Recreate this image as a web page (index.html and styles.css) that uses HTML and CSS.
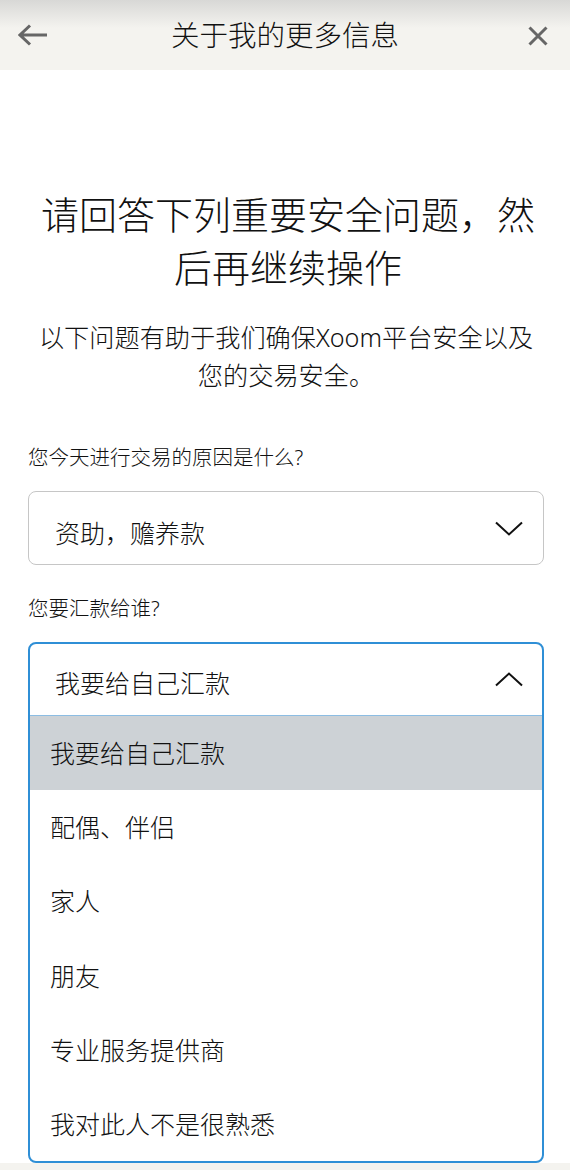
FILE: index.html
```html
<!DOCTYPE html>
<html lang="zh-CN">
<head>
<meta charset="utf-8">
<link rel="stylesheet" href="styles.css">
</head>
<body>
<header class="topbar">
  <span class="icon back">
    <svg width="30" height="22" viewBox="0 0 30 22"><path d="M2 11H29M12 1.5L2 11L12 20.5" fill="none" stroke="#666" stroke-width="3"/></svg>
  </span>
  <h1 class="title">关于我的更多信息</h1>
  <span class="icon close">
    <svg width="20" height="20" viewBox="0 0 20 20"><path d="M1.5 1.5L18.5 18.5M18.5 1.5L1.5 18.5" fill="none" stroke="#666" stroke-width="3"/></svg>
  </span>
</header>
<main class="content">
  <h2 class="heading">请回答下列重要安全问题，然后再继续操作</h2>
  <p class="sub">以下问题有助于我们确保Xoom平台安全以及您的交易安全。</p>

  <div class="field">
    <div class="label">您今天进行交易的原因是什么?</div>
    <div class="select">
      <span class="value">资助，赡养款</span>
      <svg class="chev" width="28" height="15" viewBox="0 0 28 15"><path d="M1 1.5L14 13.5L27 1.5" fill="none" stroke="#111" stroke-width="2"/></svg>
    </div>
  </div>

  <div class="field second">
    <div class="label">您要汇款给谁?</div>
    <div class="dropdown">
      <div class="dd-head">
        <span class="value">我要给自己汇款</span>
        <svg class="chev" width="28" height="15" viewBox="0 0 28 15"><path d="M1 13.5L14 1.5L27 13.5" fill="none" stroke="#111" stroke-width="2"/></svg>
      </div>
      <ul class="options">
        <li class="opt active">我要给自己汇款</li>
        <li class="opt">配偶、伴侣</li>
        <li class="opt">家人</li>
        <li class="opt">朋友</li>
        <li class="opt">专业服务提供商</li>
        <li class="opt">我对此人不是很熟悉</li>
      </ul>
    </div>
  </div>
</main>
</body>
</html>
```

FILE: styles.css
```css
html, body {
  margin: 0;
  padding: 0;
}
body {
  background: #f4f3ef;
  font-family: "Noto Sans", "Noto Sans CJK SC", sans-serif;
  font-weight: 300;
  color: #111;
  width: 570px;
}
.topbar {
  height: 70px;
  background: linear-gradient(#d8d8d6 0px, #f4f3ef 28px, #f4f3ef 100%);
  display: flex;
  align-items: center;
  justify-content: space-between;
  padding: 0 22px 0 18px;
  box-sizing: border-box;
}
.icon {
  display: flex;
  align-items: center;
}
.back svg { display: block; }
.close { padding-top: 2px; }
.title {
  margin: 0;
  font-size: 28.5px;
  font-weight: 300;
  line-height: 36px;
  color: #111;
  padding-right: 6px;
}
.content {
  background: #fff;
  padding: 118px 26px 0 28px;
}
.heading {
  margin: 0;
  font-size: 38px;
  line-height: 53px;
  font-weight: 300;
  text-align: center;
  color: #111;
  padding: 0 4px 0 8px;
}
.sub {
  margin: 24px 0 0 0;
  font-size: 25.2px;
  line-height: 38px;
  text-align: center;
  color: #111;
}
.field {
  margin-top: 49px;
}
.field.second {
  margin-top: 29px;
}
.label {
  font-size: 20.5px;
  line-height: 28px;
  color: #111;
  margin-bottom: 20px;
}
.select {
  height: 74px;
  box-sizing: border-box;
  border: 1.5px solid #c6c6c6;
  border-radius: 8px;
  display: flex;
  align-items: center;
  justify-content: space-between;
  padding: 0 20px 0 26px;
}
.value {
  font-size: 25px;
  line-height: 34px;
  color: #111;
  padding-top: 10px;
}
.chev { display: block; }
.dropdown {
  border: 2px solid #2f8fd6;
  border-radius: 8px;
  overflow: hidden;
}
.dd-head {
  height: 72px;
  box-sizing: border-box;
  border-bottom: 1px solid #8cbde3;
  display: flex;
  align-items: center;
  justify-content: space-between;
  padding: 0 19px 0 25px;
}
.dd-head .value {
  padding-top: 6px;
}
.options {
  list-style: none;
  margin: 0;
  padding: 0;
}
.opt {
  height: 74.2px;
  box-sizing: border-box;
  display: flex;
  align-items: center;
  padding: 0 0 0 20px;
  font-size: 25px;
  line-height: 34px;
  color: #111;
}
.opt.active {
  background: #cdd2d6;
}
```
